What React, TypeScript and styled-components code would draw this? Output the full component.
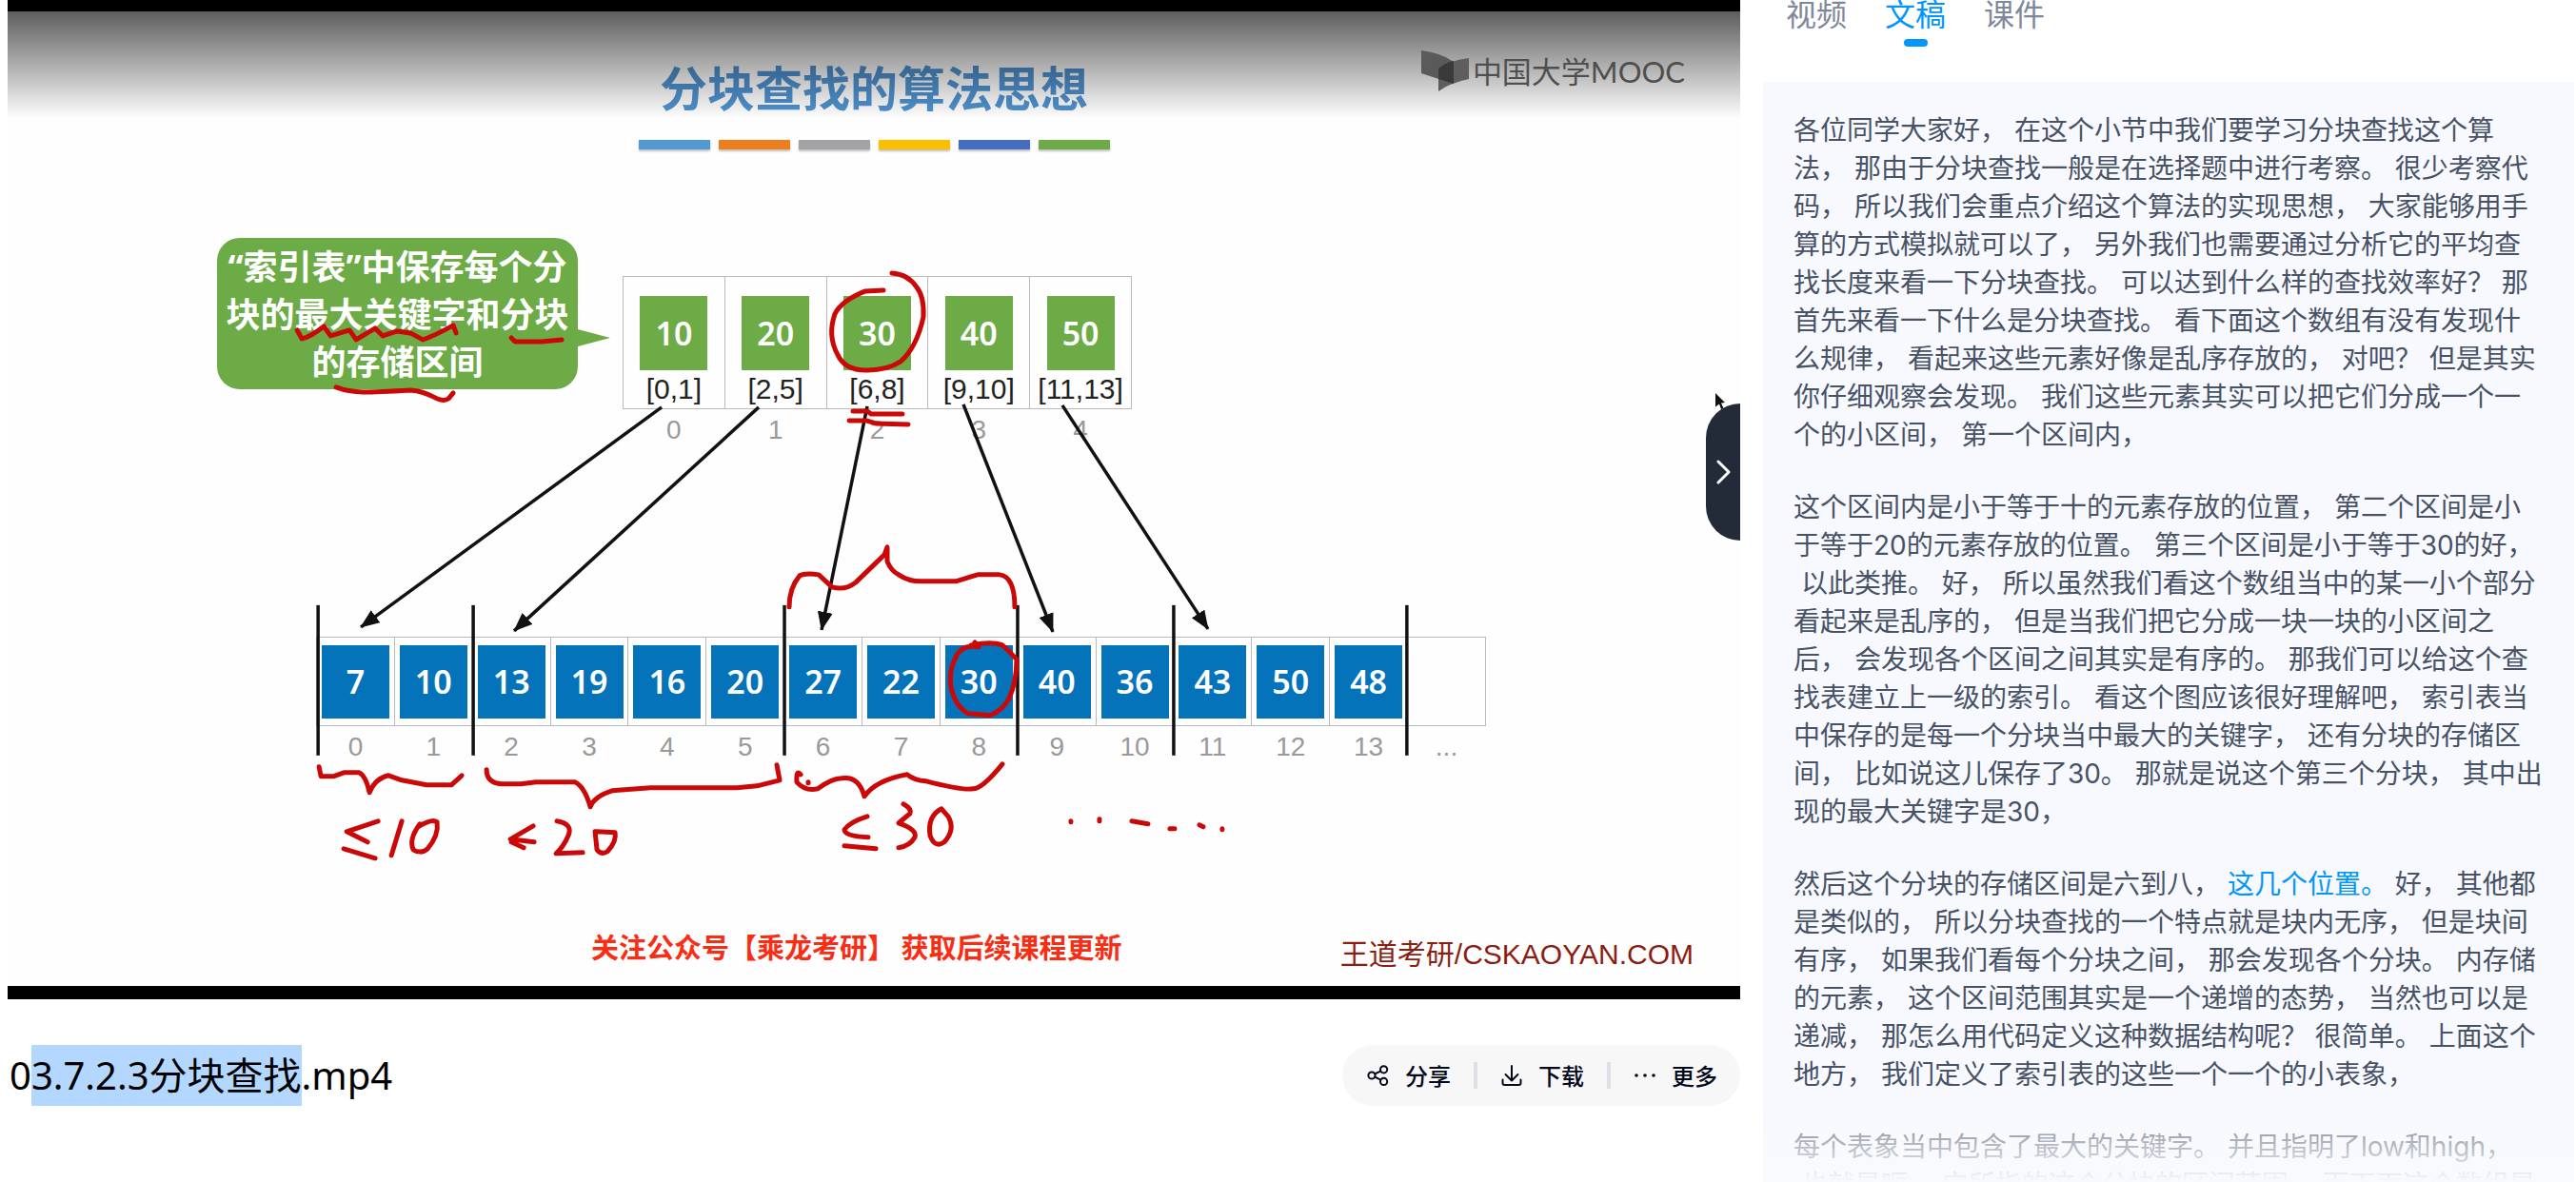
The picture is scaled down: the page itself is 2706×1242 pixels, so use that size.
import React, { Fragment } from "react";
import styled, { createGlobalStyle } from "styled-components";

const cjk = `"Noto Sans CJK SC", sans-serif`;

const GlobalStyle = createGlobalStyle`
  * { box-sizing: border-box; }
  body { margin: 0; background: #fff; font-family: "Noto Sans", ${cjk}; }
  button { font: inherit; color: inherit; background: none; border: 0; padding: 0; }
  table { border-collapse: collapse; table-layout: fixed; }
  p, h1, h2 { margin: 0; font-weight: 400; }
`;

const Page = styled.div`
  display: grid;
  grid-template-columns: minmax(0, 1fr) 852px;
  column-gap: 24px;
  height: 100vh;
  padding: 0 2px 0 8px;
  overflow: hidden;
`;

/* ---------- player ---------- */

const Player = styled.section`
  position: relative;
  padding: 12px 0 14px;
  background: #000;
`;

const Slide = styled.div`
  position: relative;
  aspect-ratio: 16 / 9;
  padding-top: 46px;
  background: #fefefe;
`;

const Shade = styled.div`
  position: absolute;
  inset: 0 0 auto;
  height: 113px;
  background: linear-gradient(rgba(0, 0, 0, 0.63), rgba(0, 0, 0, 0));
`;

const SlideTitle = styled.h2`
  color: #4f92cf;
  font: 700 50px/64px ${cjk};
  text-align: center;
`;

const Stripes = styled.div`
  display: flex;
  justify-content: center;
  gap: 9px;
  margin-top: 25px;
`;

const Stripe = styled.span<{ $color: string }>`
  width: 75px;
  height: 10px;
  background: ${(p) => p.$color};
  box-shadow: 0 2px 2px rgba(0, 0, 0, 0.25);
`;

const Watermark = styled.div`
  position: absolute;
  top: 40px;
  right: 58px;
  display: flex;
  align-items: center;
  gap: 4px;
  color: #4f4f4f;
  font: 400 31px/46px Lato, ${cjk};
`;

const IndexRow = styled.div`
  display: flex;
  align-items: flex-start;
  gap: 47px;
  margin-top: 93px;
  padding-left: 220px;
`;

const Callout = styled.p`
  position: relative;
  width: 379px;
  padding: 6px 0 3px;
  border-radius: 24px;
  background: #6cab45;
  color: #fff;
  font: 700 36px/50px "Noto Sans", ${cjk};
  text-align: center;
  white-space: nowrap;

  &::after {
    content: "";
    position: absolute;
    top: 96px;
    left: 100%;
    border: solid transparent;
    border-width: 9px 0 9px 34px;
    border-left-color: #6cab45;
  }
`;

const IndexTable = styled.table`
  width: 535px;
  margin-top: 40px;
`;

const ArrayTable = styled.table`
  width: 1229px;
  margin: 196px 0 0 324px;
`;

const Cell = styled.td<{ $top: number }>`
  padding: ${(p) => p.$top}px 0 0;
  border: 1px solid #bbb;
  vertical-align: top;
`;

const Block = styled.div<{ $color: string; $height: number }>`
  width: 71px;
  height: ${(p) => p.$height}px;
  margin: 0 auto;
  background: ${(p) => p.$color};
  color: #fff;
  font-size: 34px;
  font-weight: 600;
  line-height: ${(p) => p.$height}px;
  text-align: center;
`;

const Spacer = styled.div`
  height: 84px;
`;

const Range = styled.div`
  color: #222;
  font: 30px/40px "Liberation Sans", sans-serif;
  text-align: center;
`;

const Label = styled.td`
  padding: 0;
  color: #999;
  font: 28px/43px "Liberation Sans", sans-serif;
  text-align: center;
`;

const Credits = styled.div`
  display: flex;
  align-items: flex-start;
  justify-content: space-between;
  margin-top: 167px;
  padding: 0 49px 0 613px;
  white-space: nowrap;
`;

const Promo = styled.p`
  color: #f92c14;
  font: 700 29px/42px ${cjk};
`;

const Source = styled.p`
  color: #8c1d12;
  font: 30px/60px "Liberation Sans", ${cjk};
`;

const Ink = styled.svg`
  position: absolute;
  inset: 0;
  width: 100%;
  height: 100%;
`;

const Toggle = styled.button`
  position: absolute;
  top: 424px;
  right: 0;
  display: flex;
  align-items: center;
  justify-content: center;
  width: 36px;
  height: 144px;
  border-radius: 36px 0 0 36px;
  background: #232a38;
`;

const Pointer = styled.svg`
  position: absolute;
  top: 412px;
  right: 12px;
  z-index: 1;
`;

/* ---------- file bar ---------- */

const FileBar = styled.div`
  display: flex;
  align-items: center;
  justify-content: space-between;
  margin-top: 48px;
`;

const FileName = styled.h1`
  color: #000;
  font-size: 40px;
  line-height: 64px;
  padding-left: 2px;
`;

const Selected = styled.mark`
  display: inline-block;
  background: #b3d7ff;
  color: inherit;
`;

const Actions = styled.div`
  display: flex;
  align-items: center;
  gap: 24px;
  height: 64px;
  padding: 0 24px 0 26px;
  border-radius: 32px;
  background: #f7f7f8;
`;

const Action = styled.button`
  display: flex;
  align-items: center;
  gap: 16px;
  color: #03081a;
  font: 500 24px/36px ${cjk};
`;

const Divider = styled.span`
  width: 4px;
  height: 28px;
  background: #dcdfe6;
`;

/* ---------- transcript ---------- */

const Side = styled.aside`
  display: flex;
  flex-direction: column;
  min-height: 0;
`;

const Tabs = styled.nav`
  display: flex;
  gap: 40px;
  height: 86px;
  padding-left: 24px;
`;

const Tab = styled.button<{ $active: boolean }>`
  display: flex;
  flex-direction: column;
  align-items: center;
  gap: 15px;
  height: 49px;
  color: ${(p) => (p.$active ? "#0095ff" : "#7f889b")};
  font: 32px/26px ${cjk};

  &::after {
    content: "";
    width: 25px;
    height: 8px;
    border-radius: 4px;
    background: ${(p) => (p.$active ? "#0095ff" : "transparent")};
  }
`;

const Transcript = styled.div`
  position: relative;
  flex: 1;
  min-height: 0;
  overflow: hidden;
  padding: 31px 30px 0 32px;
  background: #f7f9fe;

  &::after {
    content: "";
    position: absolute;
    inset: auto 0 0;
    height: 100px;
    background: linear-gradient(rgba(249, 250, 253, 0), #f9fafd);
  }
`;

const Paragraph = styled.p`
  margin-bottom: 36px;
  color: #475266;
  font: 28px/40px Inter, ${cjk};
`;

const Sentence = styled.span<{ $current: boolean }>`
  color: ${(p) => (p.$current ? "#0095ff" : "inherit")};
`;

const stripes = ["#5299d3", "#ee7d1c", "#a3a3a5", "#fac000", "#446cc0", "#6cab45"];

const indexEntries = [
  ["10", "[0,1]"],
  ["20", "[2,5]"],
  ["30", "[6,8]"],
  ["40", "[9,10]"],
  ["50", "[11,13]"],
];

const values = [7, 10, 13, 19, 16, 20, 27, 22, 30, 40, 36, 43, 50, 48];

const arrows = [
  [687, 416, 371, 647],
  [789, 416, 532, 651],
  [903, 415, 855, 650],
  [1004, 413, 1098, 652],
  [1108, 414, 1261, 649],
];

const blockEdges = [326, 489, 816, 1061, 1225, 1470];

const penStrokes = [
  "M304 335 L309 344 Q318 342 332 331 L339 341 L359 335 L366 345 L386 333 L394 341 L409 336 L423 338 L436 345 Q446 342 468 330 L471 338",
  "M529 343 L533 347 L561 347 L582 345",
  "M345 395 Q358 400 373 400 T423 398 Q436 399 447 405 T463 407 L468 401",
  "M920 293 L901 294 Q876 304 869 318 Q861 341 872 361 Q880 378 904 377 Q924 377 938 368 Q955 353 962 321 Q963 300 955 290 Q946 276 929 275",
  "M888 420 L903 420 L907 423 L940 423",
  "M884 430 L902 430 L912 433 L946 434",
  "M821 626 Q821 606 832 593 Q838 590 852 592 L866 605 Q880 609 891 600 L921 571 L924 563 L924 578 Q928 588 936 592 Q946 599 960 599 L996 599 L1019 592 L1042 592 Q1058 594 1058 626",
  "M1016 663 L1020 668 Q1005 665 998 675 Q988 692 991 710 Q995 730 1009 738 L1032 740 Q1046 734 1052 722 Q1060 705 1060 681 Q1052 672 1045 666 Q1034 662 1012 666",
  "M327 794 L329 804 L342 804 L353 800 L369 800 Q376 803 380 821 Q386 806 400 803 L414 808 L440 813 L466 813 L477 803",
  "M503 797 Q503 811 519 812 L539 812 L555 810 L596 810 Q606 815 612 836 Q616 825 635 819 L675 816 L766 816 L787 814 L811 808 L808 792",
  "M833 802 Q828 796 829 810 Q838 820 851 817 Q866 806 876 806 Q894 803 900 825 Q912 808 945 802 Q952 808 965 809 Q1004 819 1014 817 Q1024 817 1045 791",
  "M841 810 L841 811",
  "M389 851 L356 862 L378 873 M353 880 L386 890",
  "M414 851 L403 887",
  "M431 857 Q446 848 451 852 Q453 866 441 880 Q434 886 426 881 Q421 870 433 854",
  "M552 856 L528 870 L553 873 M529 873 L542 879",
  "M577 851 Q594 854 589 866 Q584 878 576 885 L604 884",
  "M617 862 L619 881 Q624 887 630 883 Q640 872 638 863 L619 862",
  "M903 846 Q884 852 879 860 Q879 867 904 868 M879 877 L912 880",
  "M941 833 Q950 838 948 843 L936 853 Q956 860 953 868 Q948 877 936 879",
  "M981 838 Q966 846 969 866 Q974 880 984 873 Q996 860 988 846 Z",
  "M1117 851 L1117 852 M1147 849 L1147 851 M1181 851 L1198 854 M1221 859 L1226 859 M1252 855 L1256 857 M1276 859 L1276 860",
];

const paragraphs: string[][] = [
  [
    "各位同学大家好，",
    "在这个小节中我们要学习分块查找这个算法，",
    "那由于分块查找一般是在选择题中进行考察。",
    "很少考察代码，",
    "所以我们会重点介绍这个算法的实现思想，",
    "大家能够用手算的方式模拟就可以了，",
    "另外我们也需要通过分析它的平均查找长度来看一下分块查找。",
    "可以达到什么样的查找效率好？",
    "那首先来看一下什么是分块查找。",
    "看下面这个数组有没有发现什么规律，",
    "看起来这些元素好像是乱序存放的，",
    "对吧？",
    "但是其实你仔细观察会发现。",
    "我们这些元素其实可以把它们分成一个一个的小区间，",
    "第一个区间内，",
  ],
  [
    "这个区间内是小于等于十的元素存放的位置，",
    "第二个区间是小于等于20的元素存放的位置。",
    "第三个区间是小于等于30的好，",
    "以此类推。",
    "好，",
    "所以虽然我们看这个数组当中的某一小个部分看起来是乱序的，",
    "但是当我们把它分成一块一块的小区间之后，",
    "会发现各个区间之间其实是有序的。",
    "那我们可以给这个查找表建立上一级的索引。",
    "看这个图应该很好理解吧，",
    "索引表当中保存的是每一个分块当中最大的关键字，",
    "还有分块的存储区间，",
    "比如说这儿保存了30。",
    "那就是说这个第三个分块，",
    "其中出现的最大关键字是30，",
  ],
  [
    "然后这个分块的存储区间是六到八，",
    "这几个位置。",
    "好，",
    "其他都是类似的，",
    "所以分块查找的一个特点就是块内无序，",
    "但是块间有序，",
    "如果我们看每个分块之间，",
    "那会发现各个分块。",
    "内存储的元素，",
    "这个区间范围其实是一个递增的态势，",
    "当然也可以是递减，",
    "那怎么用代码定义这种数据结构呢？",
    "很简单。",
    "上面这个地方，",
    "我们定义了索引表的这些一个一个的小表象，",
  ],
  [
    "每个表象当中包含了最大的关键字。",
    "并且指明了low和high，",
    "也就是呃，",
    "它所指的这个分块的区间范围，",
    "而下面这个数组是",
  ],
];

const currentSentence = "这几个位置。";

function Annotations() {
  return (
    <Ink viewBox="0 0 1820 1024" aria-hidden="true">
      <defs>
        <marker id="head" markerUnits="userSpaceOnUse" markerWidth="22" markerHeight="18" refX="19" refY="8" orient="auto">
          <path d="M0 0 L20 8 L0 16 Z" fill="#111" />
        </marker>
      </defs>
      <g stroke="#111" strokeWidth="3.500">
        {arrows.map(([x1, y1, x2, y2]) => (
          <line key={x1} x1={x1} y1={y1} x2={x2} y2={y2} markerEnd="url(#head)" />
        ))}
        {blockEdges.map((x) => (
          <line key={x} x1={x} x2={x} y1={624} y2={782} />
        ))}
      </g>
      <g fill="none" stroke="#cb0808" strokeWidth="5" strokeLinecap="round" strokeLinejoin="round">
        {penStrokes.map((d) => (
          <path key={d} d={d} />
        ))}
      </g>
    </Ink>
  );
}

function LectureSlide() {
  return (
    <Slide>
      <SlideTitle>分块查找的算法思想</SlideTitle>
      <Stripes>
        {stripes.map((color) => (
          <Stripe key={color} $color={color} />
        ))}
      </Stripes>
      <IndexRow>
        <Callout>
          “索引表”中保存每个分
          <br />
          块的最大关键字和分块
          <br />
          的存储区间
        </Callout>
        <IndexTable>
          <tbody>
            <tr>
              {indexEntries.map(([max, range]) => (
                <Cell key={max} $top={20}>
                  <Block $color="#6cab45" $height={78}>
                    {max}
                  </Block>
                  <Range>{range}</Range>
                </Cell>
              ))}
            </tr>
            <tr>
              {indexEntries.map(([max], i) => (
                <Label key={max}>{i}</Label>
              ))}
            </tr>
          </tbody>
        </IndexTable>
      </IndexRow>
      <ArrayTable>
        <tbody>
          <tr>
            {values.map((value, i) => (
              <Cell key={i} $top={8}>
                <Block $color="#0573ba" $height={77}>
                  {value}
                </Block>
              </Cell>
            ))}
            <Cell $top={8}>
              <Spacer />
            </Cell>
          </tr>
          <tr>
            {values.map((_, i) => (
              <Label key={i}>{i}</Label>
            ))}
            <Label>...</Label>
          </tr>
        </tbody>
      </ArrayTable>
      <Credits>
        <Promo>关注公众号【乘龙考研】 获取后续课程更新</Promo>
        <Source>王道考研/CSKAOYAN.COM</Source>
      </Credits>
      <Annotations />
      <Shade />
      <Watermark>
        <svg width="50" height="44" viewBox="0 0 50 44" aria-hidden="true">
          <path d="M0 0 Q22 3 34 12 V35 L0 24 Z" fill="#5a5a5a" />
          <path d="M18 19 Q28 11 50 8 V30 Q30 34 18 43 Z" fill="#5e5e5e" />
          <path d="M18 19 Q25 13 34 11 V35 L18 30 Z" fill="#3a3a3a" />
        </svg>
        中国大学MOOC
      </Watermark>
    </Slide>
  );
}

const iconProps = {
  width: 24,
  height: 24,
  viewBox: "0 0 24 24",
  fill: "none",
  stroke: "currentColor",
  strokeWidth: 2,
  strokeLinecap: "round" as const,
  strokeLinejoin: "round" as const,
  "aria-hidden": true,
};

const ShareIcon = () => (
  <svg {...iconProps}>
    <circle cx="5" cy="12" r="3.6" />
    <circle cx="17.6" cy="5.8" r="3.6" />
    <circle cx="17.6" cy="18.4" r="3.6" />
    <path d="M8.3 10.4 14.3 7.5M8.3 13.6 14.3 16.7" />
  </svg>
);

const DownloadIcon = () => (
  <svg {...iconProps}>
    <path d="M12 2 V17 M5.5 11 L12 17.5 L18.5 11 M2.5 16.5 V20 Q2.5 22 4.5 22 H19.5 Q21.5 22 21.5 20 V16.5" />
  </svg>
);

const MoreIcon = () => (
  <svg {...iconProps} fill="currentColor" stroke="none">
    <circle cx="3" cy="12" r="1.8" />
    <circle cx="12" cy="12" r="1.8" />
    <circle cx="21" cy="12" r="1.8" />
  </svg>
);

export default function App() {
  return (
    <Page>
      <GlobalStyle />
      <main>
        <Player>
          <LectureSlide />
          <Pointer width="16" height="20" viewBox="0 0 16 20" aria-hidden="true">
            <path d="M2 1 L12 11 L8 11.500 L10.500 17 L8 18 L6 12.500 L2 15.500 Z" fill="#111" />
          </Pointer>
          <Toggle aria-label="收起">
            <svg width="16" height="26" viewBox="0 0 16 26" fill="none" stroke="#fff" strokeWidth="3" strokeLinecap="round" strokeLinejoin="round">
              <path d="M3 2 L14 13 L3 24" />
            </svg>
          </Toggle>
        </Player>
        <FileBar>
          <FileName>
            0<Selected>3.7.2.3分块查找</Selected>.mp4
          </FileName>
          <Actions>
            <Action>
              <ShareIcon />
              分享
            </Action>
            <Divider />
            <Action>
              <DownloadIcon />
              下载
            </Action>
            <Divider />
            <Action>
              <MoreIcon />
              更多
            </Action>
          </Actions>
        </FileBar>
      </main>
      <Side>
        <Tabs>
          {["视频", "文稿", "课件"].map((name) => (
            <Tab key={name} $active={name === "文稿"}>
              {name}
            </Tab>
          ))}
        </Tabs>
        <Transcript>
          {paragraphs.map((sentences) => (
            <Paragraph key={sentences[0]}>
              {sentences.map((text, i) => (
                <Fragment key={i}>
                  {i > 0 && <wbr />}
                  <Sentence $current={text === currentSentence}>
                    {i > 0 && "\u00a0"}
                    {text}
                  </Sentence>
                </Fragment>
              ))}
            </Paragraph>
          ))}
        </Transcript>
      </Side>
    </Page>
  );
}
